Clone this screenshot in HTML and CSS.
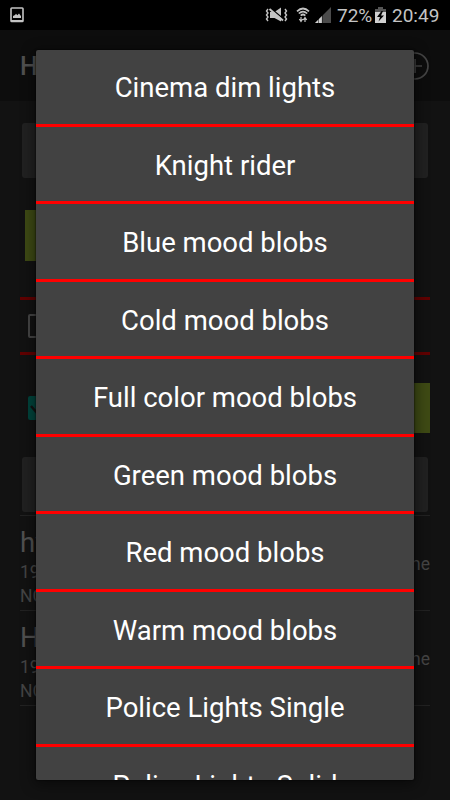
FILE: index.html
```
<!DOCTYPE html>
<html lang="en">
<head>
    <meta charset="UTF-8">
    <meta name="viewport" content="width=device-width, initial-scale=1.0">
    <title>Effects</title>
    <link rel="stylesheet" href="styles.css">
</head>
<body>

<div class="screen">
    <div class="status-bar">
        <svg class="icon-picture" width="14" height="16" viewBox="0 0 14 16">
            <rect x="1" y="1" width="12" height="13.5" rx="0.8" fill="none" stroke="#c4c4c4" stroke-width="1.6"/>
            <path d="M1 13h12v2H1zM3 11V9l2-1 1-1.2 1.3 1.4L9 6.5l1.5 2L11 9v2z" fill="#c4c4c4"/>
        </svg>
        <div class="status-right">
            <svg class="icon-mute" width="24" height="16" viewBox="0 0 24 16">
                <path d="M5 5h4.500L16 0.500v14L9.500 11H5z" fill="#c4c4c4"/>
                <path d="M5 0.800l14 11.500" stroke="#000" stroke-width="1.500"/>
                <path d="M4.500 2l13.500 11.500" stroke="#c4c4c4" stroke-width="2"/>
                <path d="M3 2L1.5 4 3 6 1.5 8 3 10l-1.500 2L3 14M20 2l1.500 2L20 6l1.500 2-1.500 2 1.500 2-1.500 2" fill="none" stroke="#c4c4c4" stroke-width="1.4"/>
            </svg>
            <svg class="icon-wifi" width="14" height="16" viewBox="0 0 14 16">
                <path d="M1 4.300Q7-1.300 13 4.300M2.800 6.500Q7 2.600 11.200 6.500M4.700 8.600Q7 6.400 9.300 8.600" fill="none" stroke="#c4c4c4" stroke-width="1.700"/>
                <path d="M5 10v4M3.300 12l1.700 2.500L6.700 12M9 15v-4M7.300 13L9 10.500l1.700 2.500" fill="none" stroke="#c4c4c4" stroke-width="1.200"/>
            </svg>
            <svg class="icon-signal" width="16" height="16" viewBox="0 0 16 16">
                <path d="M16 0v16H0z" fill="#4b4b4b"/>
                <path d="M7 9v7H0z" fill="#d0d0d0"/>
                <path d="M3.500 10v6M7.300 7v9" stroke="#000" stroke-width="0.500"/>
            </svg>
            <span class="battery-text">72%</span>
            <svg class="icon-battery" width="11" height="16" viewBox="0 0 11 16">
                <path d="M3 0h5v2h3v4H0V2h3z" fill="#555"/>
                <path d="M0 5h11v11H0z" fill="#d0d0d0"/>
                <path d="M6.500 4L2 10h3l-1.500 4.500L9 8.500H6L8 4z" fill="#000"/>
            </svg>
            <span class="clock">20:49</span>
        </div>
    </div>

    <div class="app">
        <div class="toolbar">
            <span class="toolbar-title">Hyperion</span>
            <svg width="28" height="28" viewBox="0 0 28 28" fill="none" stroke="#454545" stroke-width="1.700">
                <circle cx="14" cy="14" r="13"/>
                <path d="M14 7v14M7 14h14"/>
            </svg>
        </div>

        <div class="content">
            <div class="field"></div>
            <div class="color-row"><div class="swatch"></div></div>
            <div class="option-row">
                <span class="checkbox"></span>
            </div>
            <div class="toggle-row">
                <span class="checkbox checked">
                    <svg width="24" height="24" viewBox="0 0 24 24"><path d="M3 10l6 7L21 5" fill="none" stroke="#121212" stroke-width="2.500"/></svg>
                </span>
                <div class="swatch small"></div>
            </div>
            <div class="field"></div>

            <div class="server-list">
                <div class="server">
                    <div>
                        <div class="server-name">hyperion</div>
                        <div class="server-line">192.168.1.10</div>
                        <div class="server-line">NONE</div>
                    </div>
                    <span class="server-state">None</span>
                </div>
                <div class="server">
                    <div>
                        <div class="server-name">Hue</div>
                        <div class="server-line">192.168.1.11</div>
                        <div class="server-line">NONE</div>
                    </div>
                    <span class="server-state">None</span>
                </div>
            </div>
        </div>
    </div>

    <div class="dialog">
        <div class="effect">Cinema dim lights</div>
        <div class="effect">Knight rider</div>
        <div class="effect">Blue mood blobs</div>
        <div class="effect">Cold mood blobs</div>
        <div class="effect">Full color mood blobs</div>
        <div class="effect">Green mood blobs</div>
        <div class="effect">Red mood blobs</div>
        <div class="effect">Warm mood blobs</div>
        <div class="effect">Police Lights Single</div>
        <div class="effect">Police Lights Solid</div>
    </div>
</div>

</body>
</html>
```
FILE: styles.css
```
* { box-sizing: border-box; }

body {
    margin: 0;
    background: #121212;
    font-family: Roboto, sans-serif;
}

.screen {
    position: relative;
    width: 450px;
    height: 800px;
    overflow: hidden;
    background: #121212;
}

svg { display: block; flex: none; }

/* status bar */
.status-bar {
    display: flex;
    justify-content: space-between;
    align-items: center;
    height: 30px;
    padding: 0 11px 0 10px;
    background: #000;
    color: #c4c4c4;
    font-size: 19px;
}

.status-right { display: flex; align-items: center; }
.icon-mute { margin-right: 7px; }
.icon-wifi { margin-right: 5px; }
.icon-signal { margin-right: 6px; }
.icon-battery { margin: 0 6px 0 3px; }
.battery-text, .clock { line-height: 30px; padding-top: 1px; }
.battery-text { width: 35px; }
.clock { width: 47px; }

/* dimmed app behind the dialog */
.toolbar {
    display: flex;
    justify-content: space-between;
    align-items: center;
    height: 71px;
    padding: 0 21px 0 20px;
    background: #0d0d0d;
}

.toolbar-title { color: #505050; font-size: 25px; font-weight: 500; letter-spacing: 1px; padding-top: 2px; }

.content { padding: 22px 20px 0; }

.field {
    height: 55px;
    margin: 0 2px;
    border-radius: 3px;
    background: #212121;
}

.color-row { padding: 32px 5px 0; height: 119px; }
.swatch { width: 300px; height: 51px; background: #3e4a14; }

.option-row {
    display: flex;
    align-items: center;
    height: 58px;
    padding-left: 8px;
    border-top: 3px solid #600000;
    border-bottom: 3px solid #600000;
}

.checkbox {
    width: 24px;
    height: 24px;
    border: 2px solid #454545;
    border-radius: 2px;
}

.checked { border: 0; background: #00443c; }

.toggle-row {
    display: flex;
    justify-content: space-between;
    align-items: center;
    height: 50px;
    margin: 28px 0 24px;
    padding-left: 8px;
}

.swatch.small { width: 120px; height: 50px; }

.server-list { margin-top: 3px; border-top: 1px solid #222; }

.server {
    display: flex;
    justify-content: space-between;
    align-items: center;
    height: 95px;
    border-bottom: 1px solid #222;
    color: #454545;
}

.server-name { font-size: 27.5px; line-height: 34px; color: #505050; padding-top: 7px; }
.server-line { font-size: 17.5px; line-height: 24px; }
.server-state { font-size: 17.5px; padding-top: 2px; }

/* effect picker */
.dialog {
    position: absolute;
    left: 36px;
    top: 50px;
    width: 378px;
    height: 730px;
    overflow: hidden;
    border-radius: 2px;
    background: #424242;
    box-shadow: 0 3px 14px 2px rgba(0, 0, 0, 0.45), 0 0 2px #000;
}

.effect {
    height: 77.5px;
    border-bottom: 3px solid #f00;
    color: #fff;
    font-size: 27.5px;
    line-height: 77px;
    text-align: center;
}

.effect:first-child { height: 76.9px; line-height: 75px; }
```
